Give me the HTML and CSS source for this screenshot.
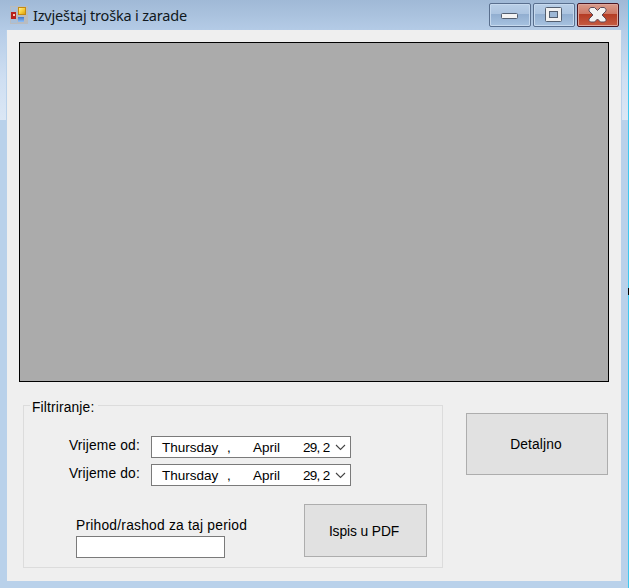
FILE: index.html
```html
<!DOCTYPE html>
<html lang="hr">
<head>
<meta charset="utf-8">
<title>Izvještaj troška i zarade</title>
<link rel="stylesheet" href="styles.css">
</head>
<body>
<div class="window">
  <header class="titlebar">
    <svg class="app-icon" width="18" height="18" viewBox="0 0 18 18">
      <defs>
        <linearGradient id="gold" x2="1" y2="1"><stop stop-color="#fff3a8"/><stop offset=".5" stop-color="#f7cf3c"/><stop offset="1" stop-color="#d99a08"/></linearGradient>
        <linearGradient id="blue" x2="0" y2="1"><stop stop-color="#3f78cc"/><stop offset="1" stop-color="#8fc0f8"/></linearGradient>
      </defs>
      <path d="M0 0h18v18H0z" fill="#b9bcc0"/>
      <path d="M1 1h6v5H1zM1 13h6v4H1z" fill="#a9bfd8"/>
      <rect x="1" y="6" width="5" height="7" fill="#b8221b"/>
      <rect x="3" y="8" width="2" height="2" fill="#f7c7b8"/>
      <rect x="8.500" y="1.500" width="7" height="7" fill="url(#gold)" stroke="#c58a10"/>
      <rect x="8" y="11" width="6" height="5" fill="url(#blue)"/>
    </svg>
    <h1 class="title">Izvještaj troška i zarade</h1>
    <div class="controls">
      <button class="control" aria-label="Minimize">
        <svg width="40" height="22" viewBox="0 0 40 22"><rect x="11.500" y="9.500" width="16" height="5" rx="1" fill="#f4f4f4" stroke="#535f70"/></svg>
      </button>
      <button class="control" aria-label="Maximize">
        <svg width="40" height="22" viewBox="0 0 40 22"><rect x="11.500" y="3.500" width="16" height="14" rx="1" fill="#f1f1f1" stroke="#535f70"/><rect x="15.500" y="7.500" width="8" height="6" fill="#9db8d6" stroke="#535f70"/></svg>
      </button>
      <button class="control close" aria-label="Close">
        <svg width="40" height="22" viewBox="0 0 40 22"><path d="M12.500 3.500h4l3 3 3-3h4l1.500 2v1.500l-4 4 4 4v1.500l-1.500 1.500h-4l-3-3-3 3h-4l-1.500-1.500v-1.500l4-4-4-4v-1.500z" fill="#f3f3f3" stroke="#5c4a58" stroke-linejoin="round"/></svg>
      </button>
    </div>
  </header>
  <main class="client">
    <section class="data-grid"></section>
    <div class="lower">
      <section class="group">
        <h2 class="legend">Filtriranje:</h2>
        <div class="date-row">
          <label class="caption">Vrijeme od:</label>
          <div class="picker"><span>Thursday</span><span class="comma">,</span><span>April</span><span class="year">29, 2</span><svg class="chevron" width="11" height="7" viewBox="0 0 11 7"><path d="M1 1l4.500 4.500L10 1"/></svg></div>
        </div>
        <div class="date-row">
          <label class="caption">Vrijeme do:</label>
          <div class="picker"><span>Thursday</span><span class="comma">,</span><span>April</span><span class="year">29, 2</span><svg class="chevron" width="11" height="7" viewBox="0 0 11 7"><path d="M1 1l4.500 4.500L10 1"/></svg></div>
        </div>
        <div class="result-row">
          <div class="result">
            <label for="total">Prihod/rashod za taj period</label>
            <input id="total" class="total" type="text">
          </div>
          <button class="button print">Ispis u PDF</button>
        </div>
      </section>
      <button class="button details">Detaljno</button>
    </div>
  </main>
  <i class="desktop-edge"></i>
</div>
</body>
</html>
```
FILE: styles.css
```css
* { box-sizing: border-box; }

body {
  margin: 0;
  overflow: hidden;
  font: 13.8px/16px "Liberation Sans", Arial, sans-serif;
  letter-spacing: 0.15px;
  color: #000;
}

button { font: inherit; color: inherit; letter-spacing: 0; padding: 0; }

.window {
  position: relative;
  width: 629px;
  height: 588px;
  padding: 0 8px 7px 7px;
  background:
    linear-gradient(#a0b9d6 0, #b4cbe6 30px) 0 0 / 100% 30px no-repeat,
    linear-gradient(#b5cce7, #cfdff2 55%, #dbe7f5) 0 30px / 6px 90px no-repeat,
    linear-gradient(#b5cce7, #cfdff2 55%, #dbe7f5) 622px 30px / 6px 90px no-repeat,
    #b9d1ea;
}

.titlebar {
  height: 30px;
  display: flex;
  align-items: flex-start;
  padding: 0 2px 0 3px;
}

.app-icon { margin-top: 6px; }

.title {
  margin: 4px 0 0 5px;
  font: 14.5px/22px "Noto Sans", sans-serif;
  letter-spacing: -0.18px;
  color: #101820;
  white-space: nowrap;
}

.controls {
  display: flex;
  gap: 2px;
  margin: 3px 0 0 auto;
}

.control {
  width: 42px;
  height: 24px;
  border: 1px solid #596f8e;
  border-radius: 2px;
  box-shadow: inset 0 0 0 1px #c6d9ee;
  background: linear-gradient(#b9cfe7 0, #acc4e0 45%, #91aed0 46%, #a7c2e0 100%);
}

.control svg { display: block; }

.close {
  border-color: #4b1622;
  box-shadow: inset 0 0 0 1px #dda59b;
  background: linear-gradient(#d99c8c 0, #cd7764 45%, #b43b23 46%, #c65c43 100%);
}

.client {
  height: 551px;
  width: 614px;
  padding: 12px 12px 0;
  background: #efefef;
}

.data-grid {
  height: 340px;
  border: 1px solid #000;
  background: #ababab;
}

.lower {
  display: flex;
  justify-content: space-between;
  padding: 23px 1px 0 4px;
}

.group {
  width: 420px;
  height: 163px;
  border: 1px solid #dcdcdc;
}

.legend {
  width: 68px;
  margin: -6px 0 20px 6px;
  padding-left: 2px;
  font: inherit;
  background: #efefef;
  white-space: nowrap;
}

.date-row {
  display: grid;
  grid-template-columns: 82px 200px;
  margin: 0 0 6px 45px;
  height: 22px;
  white-space: nowrap;
}

.caption { line-height: 19px; }

.picker {
  display: grid;
  grid-template-columns: 65px 26px 50px 31px 11px;
  align-items: center;
  height: 22px;
  padding-left: 10px;
  border: 1px solid #7a7a7a;
  background: #fff;
  font-size: 13.5px;
  letter-spacing: 0;
}

.picker span { line-height: 19px; padding-top: 1px; }
.picker .year { letter-spacing: -0.7px; }

.chevron {
  margin: 0 0 0 1px;
  fill: none;
  stroke: #444;
  stroke-width: 1.1;
}

.result-row {
  display: flex;
  justify-content: space-between;
  margin: 18px 15px 0 52px;
}

.result { padding-top: 14px; white-space: nowrap; letter-spacing: 0.23px; }
.result label { display: block; height: 18px; }

.total {
  display: block;
  width: 149px;
  height: 22px;
  border: 1px solid #7a7a7a;
  background: #fff;
}

.button {
  border: 1px solid #adadad;
  background: #e1e1e1;
}

.print { width: 123px; height: 53px; padding: 3px 3px 0 0; letter-spacing: -0.1px; }
.details { width: 142px; height: 62px; margin-top: 8px; padding: 1px 2px 0 0; letter-spacing: 0.1px; }

.desktop-edge {
  position: absolute;
  right: 0;
  top: 0;
  width: 1px;
  height: 588px;
  background: linear-gradient(#000, #000) 0 288px / 1px 7px no-repeat, #3fc8ee;
}
```
